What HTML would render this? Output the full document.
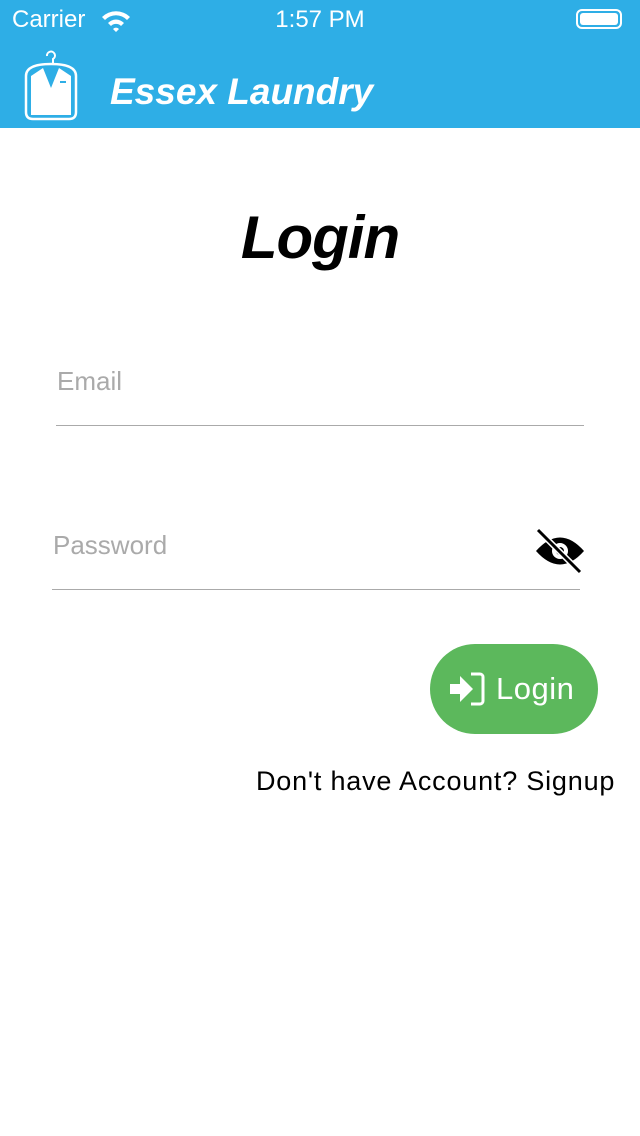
<!DOCTYPE html>
<html><head><meta charset="utf-8"><style>
body{margin:0;width:640px;height:1136px;background:#fff;font-family:"Liberation Sans",sans-serif;position:relative;overflow:hidden}
.hdr{position:absolute;left:0;top:0;width:640px;height:128px;background:#2eaee6;color:#fff}
.abs{position:absolute}
</style></head><body>
<div class="hdr">
<div class="abs" style="left:12px;top:6px;font-size:24px;">Carrier</div>
<svg class="abs" style="left:100px;top:8px" width="32" height="24" viewBox="0 0 32 24"><path d="M2 9 A20 20 0 0 1 30 9 L27 12 A15 15 0 0 0 5 12Z M8 15 A11 11 0 0 1 24 15 L21 18 A7 7 0 0 0 11 18Z M13 21 A4 4 0 0 1 19 21 L16 24Z" fill="#fff"/></svg>
<div class="abs" style="left:0;width:640px;top:6px;text-align:center;font-size:24px;">1:57 PM</div>
<div class="abs" style="left:576px;top:9px;width:46px;height:20px;border:2px solid #fff;border-radius:6px;box-sizing:border-box;padding:2px"><div style="background:#fff;width:100%;height:100%;border-radius:3px"></div></div>
<svg class="abs" style="left:22px;top:48px" width="58" height="74" viewBox="0 0 58 74">
<path d="M25 8 a4 4 0 1 1 6 3 v5" fill="none" stroke="#fff" stroke-width="2"/>
<path d="M4 28 Q4 16 29 16 Q54 16 54 28 V64 Q54 71 47 71 H11 Q4 71 4 64Z" fill="none" stroke="#fff" stroke-width="2.5"/>
<path d="M9 28 L21 20 L29 40 L37 20 L49 28 V67 H9Z" fill="#fff"/>
<path d="M27 22 h4 l-2 15z" fill="#2eaee6"/>
<path d="M38 34 h6" stroke="#2eaee6" stroke-width="2"/>
</svg>
<div class="abs" style="left:110px;top:68px;font-size:37px;font-style:italic;font-weight:bold;line-height:48px">Essex Laundry</div>
</div>
<div class="abs" style="left:0;width:640px;top:200px;text-align:center;font-size:60px;font-style:italic;font-weight:bold;line-height:76px;letter-spacing:-1px">Login</div>
<div class="abs" style="left:57px;top:366px;font-size:26px;color:#aaa">Email</div>
<div class="abs" style="left:56px;top:425px;width:528px;height:1px;background:#aaa"></div>
<div class="abs" style="left:53px;top:530px;font-size:26px;color:#aaa">Password</div>
<div class="abs" style="left:52px;top:589px;width:528px;height:1px;background:#aaa"></div>
<svg class="abs" style="left:534px;top:528px" width="52" height="46" viewBox="0 0 52 46">
<path d="M2 23 Q26 -4 50 23 Q26 50 2 23Z" fill="#000"/>
<circle cx="26" cy="23" r="8" fill="#fff"/><circle cx="26" cy="23" r="4" fill="#000"/>
<path d="M4 2 L46 44" stroke="#fff" stroke-width="6"/><path d="M4 2 L46 44" stroke="#000" stroke-width="3"/>
</svg>
<div class="abs" style="left:430px;top:644px;width:168px;height:90px;border-radius:45px;background:#5cb85c"></div>
<svg class="abs" style="left:450px;top:672px" width="36" height="34" viewBox="0 0 36 34">
<path d="M0 12 h10 v-8 l13 13 l-13 13 v-8 h-10z" fill="#fff"/>
<path d="M21 2 h9 a3 3 0 0 1 3 3 v24 a3 3 0 0 1 -3 3 h-9" fill="none" stroke="#fff" stroke-width="3"/>
</svg>
<div class="abs" style="left:496px;top:670px;font-size:31px;color:#fff;line-height:38px;letter-spacing:0.5px">Login</div>
<div class="abs" style="left:256px;top:764px;font-size:27px;line-height:34px;letter-spacing:0.8px">Don't have Account? Signup</div>
</body></html>
